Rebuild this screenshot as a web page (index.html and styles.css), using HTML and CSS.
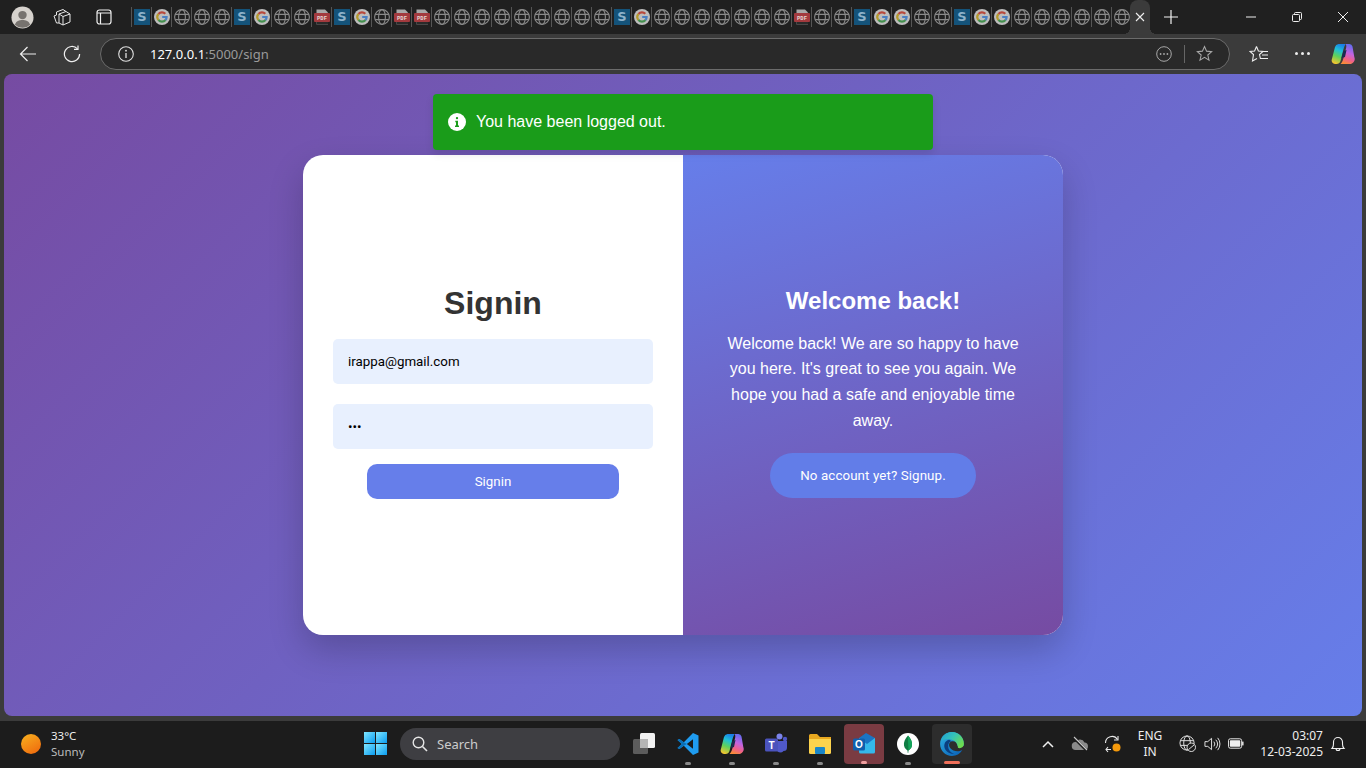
FILE: index.html
```html
<!DOCTYPE html>
<html>
<head>
    <title>Signin</title>
    <meta name="viewport" content="width=device-width, initial-scale=1.0">
    <link rel="stylesheet" href="styles.css">
</head>
<body>
    <svg class="defs" aria-hidden="true">
        <defs>
            <linearGradient id="copA" x1="0.6" y1="0" x2="0.3" y2="1"><stop offset="0" stop-color="#1a7fe8"/><stop offset="0.3" stop-color="#1fc0d8"/><stop offset="0.62" stop-color="#5fd25a"/><stop offset="1" stop-color="#f8c52e"/></linearGradient>
            <linearGradient id="copB" x1="0.7" y1="0" x2="0.4" y2="1"><stop offset="0" stop-color="#5a6cf0"/><stop offset="0.45" stop-color="#c264e0"/><stop offset="0.75" stop-color="#f0608a"/><stop offset="1" stop-color="#f88a3a"/></linearGradient>
            <linearGradient id="winG" x1="0" y1="0" x2="1" y2="1"><stop offset="0" stop-color="#7fe6ff"/><stop offset="1" stop-color="#0a9cf0"/></linearGradient>
            <linearGradient id="sunG" x1="0" y1="0" x2="0.6" y2="1"><stop offset="0" stop-color="#f7b21f"/><stop offset="1" stop-color="#f0700f"/></linearGradient>
            <linearGradient id="edgeA" x1="0" y1="0" x2="0.8" y2="1"><stop offset="0" stop-color="#2fb4e4"/><stop offset="1" stop-color="#0b62b8"/></linearGradient>
            <linearGradient id="edgeB" x1="0" y1="0" x2="1" y2="0.6"><stop offset="0" stop-color="#1f9fd8"/><stop offset="0.5" stop-color="#35c4b8"/><stop offset="1" stop-color="#6ddc50"/></linearGradient>
            <symbol id="fav-s" viewBox="0 0 16 16"><rect width="16" height="16" fill="#14537a"/><text x="8" y="12.400" text-anchor="middle" class="fav-s-text">S</text></symbol>
            <symbol id="fav-g" viewBox="0 0 16 16">
                <circle cx="8" cy="8" r="8" fill="#bdbdbd"/>
                <g fill="none" stroke-width="2.200">
                    <path d="M11.300 4.800A4.600 4.600 0 0 0 4.500 5" stroke="#b8483c"/>
                    <path d="M4.500 5A4.600 4.600 0 0 0 4.500 11" stroke="#b59a2c"/>
                    <path d="M4.500 11A4.600 4.600 0 0 0 11.500 11" stroke="#44904f"/>
                    <path d="M11.500 11A4.600 4.600 0 0 0 12.600 8H8.200" stroke="#4a7fc4"/>
                </g>
            </symbol>
            <symbol id="fav-w" viewBox="0 0 16 16">
                <g fill="none" stroke="#8a8a8a" stroke-width="1.100">
                    <circle cx="8" cy="8" r="7.400"/>
                    <ellipse cx="8" cy="8" rx="3.400" ry="7.400"/>
                    <path d="M1.200 5.400H14.800M1.200 10.600H14.800"/>
                </g>
            </symbol>
            <symbol id="fav-p" viewBox="0 0 16 16">
                <path d="M2.500 .5H11L14 3.500V15.500H2.500z" fill="#a9a9a9"/>
                <path d="M2.500 13H14V15.500H2.500z" fill="#2a2a2a"/>
                <rect y="4" width="16" height="9" rx="1" fill="#a33a3e"/>
                <text x="8" y="10.700" text-anchor="middle" class="fav-p-text">PDF</text>
            </symbol>
            <symbol id="copilot" viewBox="0 0 24 24">
                <path d="M7.500 2H14.500C12.500 6 12 9 11 13L9.500 19C9 21 7.500 22 5.500 22H4A3.500 3.500 0 0 1 .8 17.500L4 5A4 4 0 0 1 7.500 2z" fill="url(#copA)"/>
                <path d="M14.500 2H18.500A3.500 3.500 0 0 1 21.500 4.500L23.300 15A5 5 0 0 1 18.500 22H9.500C11.500 20 12 18 13 14L15 6.500C15.500 4.500 15.500 3 14.500 2z" fill="url(#copB)"/>
                <path d="M12.500 9L15.500 8 14 15 10.500 16z" fill="#1c2a50"/>
            </symbol>
        </defs>
    </svg>

    <div class="tabstrip">
        <div class="strip-left">
            <svg class="avatar" viewBox="0 0 24 24"><circle cx="12" cy="12" r="11.500" fill="#d6d2cd"/><circle cx="12" cy="9.500" r="4.400" fill="#77736f"/><path d="M4 19.500C5.500 15.500 8.500 14.600 12 14.600S18.500 15.500 20 19.500A11.500 11.500 0 0 1 4 19.500z" fill="#77736f"/></svg>
            <svg class="strip-icon workspaces" viewBox="0 0 18 18"><g fill="none" stroke="#e8e8e8" stroke-width="1"><path d="M6 6L13 3.500 17 6V14L10 17 6 15z"/><path d="M6 6L10 8.500 17 6M10 8.500V17"/><path d="M3.500 7L1 8 3.500 15 6 15M3.500 7L3.500 4 10 1.500 13 3.500"/></g></svg>
            <svg class="strip-icon vtabs" viewBox="0 0 16 16"><g fill="none" stroke="#f0f0f0" stroke-width="1.200"><rect x="1" y="1" width="14" height="14" rx="2.500"/><path d="M1 4H15M4.500 4V15"/></g></svg>
        </div>
        <div class="tabs">
            <div class="tab"><svg><use href="#fav-s"/></svg></div>
            <div class="tab"><svg><use href="#fav-g"/></svg></div>
            <div class="tab"><svg><use href="#fav-w"/></svg></div>
            <div class="tab"><svg><use href="#fav-w"/></svg></div>
            <div class="tab"><svg><use href="#fav-w"/></svg></div>
            <div class="tab"><svg><use href="#fav-s"/></svg></div>
            <div class="tab"><svg><use href="#fav-g"/></svg></div>
            <div class="tab"><svg><use href="#fav-w"/></svg></div>
            <div class="tab"><svg><use href="#fav-w"/></svg></div>
            <div class="tab"><svg><use href="#fav-p"/></svg></div>
            <div class="tab"><svg><use href="#fav-s"/></svg></div>
            <div class="tab"><svg><use href="#fav-g"/></svg></div>
            <div class="tab"><svg><use href="#fav-w"/></svg></div>
            <div class="tab"><svg><use href="#fav-p"/></svg></div>
            <div class="tab"><svg><use href="#fav-p"/></svg></div>
            <div class="tab"><svg><use href="#fav-w"/></svg></div>
            <div class="tab"><svg><use href="#fav-w"/></svg></div>
            <div class="tab"><svg><use href="#fav-w"/></svg></div>
            <div class="tab"><svg><use href="#fav-w"/></svg></div>
            <div class="tab"><svg><use href="#fav-w"/></svg></div>
            <div class="tab"><svg><use href="#fav-w"/></svg></div>
            <div class="tab"><svg><use href="#fav-w"/></svg></div>
            <div class="tab"><svg><use href="#fav-w"/></svg></div>
            <div class="tab"><svg><use href="#fav-w"/></svg></div>
            <div class="tab"><svg><use href="#fav-s"/></svg></div>
            <div class="tab"><svg><use href="#fav-g"/></svg></div>
            <div class="tab"><svg><use href="#fav-w"/></svg></div>
            <div class="tab"><svg><use href="#fav-w"/></svg></div>
            <div class="tab"><svg><use href="#fav-w"/></svg></div>
            <div class="tab"><svg><use href="#fav-w"/></svg></div>
            <div class="tab"><svg><use href="#fav-w"/></svg></div>
            <div class="tab"><svg><use href="#fav-w"/></svg></div>
            <div class="tab"><svg><use href="#fav-w"/></svg></div>
            <div class="tab"><svg><use href="#fav-p"/></svg></div>
            <div class="tab"><svg><use href="#fav-w"/></svg></div>
            <div class="tab"><svg><use href="#fav-w"/></svg></div>
            <div class="tab"><svg><use href="#fav-s"/></svg></div>
            <div class="tab"><svg><use href="#fav-g"/></svg></div>
            <div class="tab"><svg><use href="#fav-g"/></svg></div>
            <div class="tab"><svg><use href="#fav-w"/></svg></div>
            <div class="tab"><svg><use href="#fav-w"/></svg></div>
            <div class="tab"><svg><use href="#fav-s"/></svg></div>
            <div class="tab"><svg><use href="#fav-g"/></svg></div>
            <div class="tab"><svg><use href="#fav-g"/></svg></div>
            <div class="tab"><svg><use href="#fav-w"/></svg></div>
            <div class="tab"><svg><use href="#fav-w"/></svg></div>
            <div class="tab"><svg><use href="#fav-w"/></svg></div>
            <div class="tab"><svg><use href="#fav-w"/></svg></div>
            <div class="tab"><svg><use href="#fav-w"/></svg></div>
            <div class="tab"><svg><use href="#fav-w"/></svg></div>
        </div>
        <div class="tab-active">
            <svg viewBox="0 0 10 10"><path d="M1 1L9 9M9 1L1 9" stroke="#f0f0f0" stroke-width="1.100"/></svg>
        </div>
        <svg class="new-tab" viewBox="0 0 14 14"><path d="M7 0V14M0 7H14" stroke="#f4f4f4" stroke-width="1.200"/></svg>
        <div class="win-controls">
            <svg viewBox="0 0 10 10"><path d="M0 5H10" stroke="#eee" stroke-width="1"/></svg>
            <svg viewBox="0 0 10 10"><g fill="none" stroke="#eee" stroke-width="1"><rect x="0.5" y="2.500" width="7" height="7" rx="1"/><path d="M2.500 2.500V1.500A1 1 0 0 1 3.500 .5H8.500A1 1 0 0 1 9.500 1.500V6.500A1 1 0 0 1 8.500 7.500H7.500"/></g></svg>
            <svg viewBox="0 0 10 10"><path d="M0 0L10 10M10 0L0 10" stroke="#eee" stroke-width="1"/></svg>
        </div>
    </div>

    <div class="toolbar">
        <svg class="tool back" viewBox="0 0 18 18"><path d="M17 9H1.500M8.500 2L1.500 9L8.500 16" fill="none" stroke="#eee" stroke-width="1.200"/></svg>
        <svg class="tool reload" viewBox="0 0 18 18"><path d="M14.500 3.800A7.600 7.600 0 1 0 16.600 9" fill="none" stroke="#eee" stroke-width="1.200"/><path d="M15 .5V4.300H11" fill="none" stroke="#eee" stroke-width="1.200"/></svg>
        <div class="address">
            <svg class="addr-info" viewBox="0 0 16 16"><circle cx="8" cy="8" r="7.300" fill="none" stroke="#e0e0e0" stroke-width="1.100"/><path d="M8 7V12" stroke="#e0e0e0" stroke-width="1.300"/><circle cx="8" cy="4.700" r=".9" fill="#e0e0e0"/></svg>
            <span class="url"><span class="url-host">127.0.0.1</span>:5000/sign</span>
            <svg class="addr-more" viewBox="0 0 16 16"><circle cx="8" cy="8" r="7.300" fill="none" stroke="#a8a8a8" stroke-width="1"/><circle cx="4.600" cy="8" r=".9" fill="#a8a8a8"/><circle cx="8" cy="8" r=".9" fill="#a8a8a8"/><circle cx="11.400" cy="8" r=".9" fill="#a8a8a8"/></svg>
            <span class="addr-sep"></span>
            <svg class="addr-star" viewBox="0 0 18 18"><path d="M9 1.500L11.200 6.500 16.600 7 12.500 10.600 13.800 16 9 13.100 4.200 16 5.500 10.600 1.400 7 6.800 6.500z" fill="none" stroke="#a8a8a8" stroke-width="1.100"/></svg>
        </div>
        <svg class="tool fav" viewBox="0 0 20 18"><path d="M7.500 1.500L9.400 6 14 6.400 10.500 9.500 11.500 14M7.500 1.500L5.600 6 1 6.400 4.500 9.500 3.500 16 8 13.500" fill="none" stroke="#eee" stroke-width="1.100"/><path d="M13 6.500H19M13 10H19M11 13.500H19" stroke="#eee" stroke-width="1.100"/></svg>
        <div class="tool-dots"><i></i><i></i><i></i></div>
        <svg class="tool copilot"><use href="#copilot"/></svg>
    </div>

    <main class="page">
        <div class="alert">
            <svg viewBox="0 0 18 18"><circle cx="9" cy="9" r="9" fill="#fff"/><rect x="7.900" y="4" width="2.200" height="2.200" rx="1" fill="#1a9c1a"/><path d="M7.300 7.700H10V12.500H11V14H7V12.500H8V9.200H7.300z" fill="#1a9c1a"/></svg>
            <span>You have been logged out.</span>
        </div>
        <div class="card">
            <form class="signin-panel">
                <h1>Signin</h1>
                <input type="email" value="irappa@gmail.com">
                <input type="password" value="123">
                <button type="button" class="signin-btn">Signin</button>
            </form>
            <div class="welcome-panel">
                <h2>Welcome back!</h2>
                <p>Welcome back! We are so happy to have you here. It's great to see you again. We hope you had a safe and enjoyable time away.</p>
                <button type="button" class="signup-btn">No account yet? Signup.</button>
            </div>
        </div>
    </main>

    <footer class="taskbar">
        <div class="weather">
            <svg viewBox="0 0 20 20"><circle cx="10" cy="10" r="10" fill="url(#sunG)"/></svg>
            <div class="weather-text"><span>33°C</span><span class="weather-sub">Sunny</span></div>
        </div>
        <div class="task-center">
            <div class="task-btn"><svg class="win-logo" viewBox="0 0 23 23"><rect width="11" height="11" fill="url(#winG)"/><rect x="12" width="11" height="11" fill="url(#winG)"/><rect y="12" width="11" height="11" fill="url(#winG)"/><rect x="12" y="12" width="11" height="11" fill="url(#winG)"/></svg></div>
            <div class="search">
                <svg viewBox="0 0 16 16"><circle cx="6.500" cy="6.500" r="5.300" fill="none" stroke="#e6e6e6" stroke-width="1.400"/><path d="M10.500 10.500L15 15" stroke="#e6e6e6" stroke-width="1.600"/></svg>
                <span>Search</span>
            </div>
            <div class="task-btn"><svg viewBox="0 0 24 24"><rect x="1" y="7" width="15" height="15" rx="1.500" fill="#5c5c5c"/><rect x="8" y="1" width="15" height="15" rx="1.500" fill="#f2f2f2"/><rect x="8" y="7" width="8" height="9" fill="#b5b5b5"/></svg></div>
            <div class="task-btn on"><svg viewBox="0 0 24 24"><path d="M17 1L7.800 10.300 3.400 7 1.500 8 5.800 12 1.500 16 3.400 17 7.800 13.700 17 23 22.500 20.500V3.500zM17 7.300V16.700L10.800 12z" fill="#1f9cf0" fill-rule="evenodd"/><path d="M3.400 7L1.500 8 5.800 12 1.500 16 3.400 17 7.800 13.700 10.800 12 7.800 10.300z" fill="#0a6fb5"/></svg></div>
            <div class="task-btn on"><svg><use href="#copilot"/></svg></div>
            <div class="task-btn on"><svg viewBox="0 0 24 24"><circle cx="15.500" cy="4.500" r="3" fill="#7b83eb"/><circle cx="21" cy="7" r="2.200" fill="#5059c9"/><path d="M12 9H23V15.500A3.500 3.500 0 0 1 19.500 19 3 3 0 0 1 17 20.500 5 5 0 0 1 12 16z" fill="#5059c9"/><rect x="1" y="6.500" width="13" height="13" rx="1.500" fill="#4b53bc"/><text x="7.500" y="16.600" text-anchor="middle" class="teams-t">T</text></svg></div>
            <div class="task-btn on"><svg viewBox="0 0 24 24"><path d="M1 3.500A1.500 1.500 0 0 1 2.500 2H9L12 5H23V8H1z" fill="#e8a820"/><path d="M1 7H23V20.500A1.500 1.500 0 0 1 21.500 22H2.500A1.500 1.500 0 0 1 1 20.500z" fill="#fcd34d"/><rect x="7" y="15" width="10" height="7" rx="1" fill="#1a86c8"/></svg></div>
            <div class="task-btn on outlook"><svg viewBox="0 0 24 24"><path d="M14 1L23 6V19H7V6z" fill="#1a74c4"/><path d="M7 6L15 12 23 6V20A1.500 1.500 0 0 1 21.500 21.500H8.500A1.500 1.500 0 0 1 7 20z" fill="#35b8ea"/><rect x="1" y="6.500" width="12" height="12" rx="1.500" fill="#0f5fae"/><text x="7" y="16.200" text-anchor="middle" class="outlook-o">O</text></svg></div>
            <div class="task-btn on"><svg viewBox="0 0 24 24"><circle cx="12" cy="12" r="11" fill="#fff"/><path d="M12 3.500C15 7 16.500 10 16 13.500 15.500 16.500 13.500 17.500 12.500 18.500L12.200 21H11.800L11.500 18.500C10.500 17.500 8.500 16.500 8 13.500 7.500 10 9 7 12 3.500z" fill="#0f7d44"/><path d="M12 3.500C15 7 16.500 10 16 13.500 15.500 16.500 13.500 17.500 12.500 18.500L12 8z" fill="#14a35a"/></svg></div>
            <div class="task-btn on edge"><svg viewBox="0 0 24 24"><path d="M12 1C5.900 1 1 5.900 1 12S5.900 23 12 23C16 23 19.500 21 21.500 17.500 18 19.500 13 19 10.500 16 8.500 13.500 9 10 12 9.500 15 9 17 11 17 13.500H23V12C23 5.900 18.100 1 12 1z" fill="url(#edgeA)"/><path d="M2.500 6.500C4.500 3 8 1 12 1 18.100 1 23 5.900 23 12 23 15 20 16.500 17.500 15.500 17.500 11 14 7.500 9.500 7.500 6.500 7.500 4 7.500 2.500 9z" fill="url(#edgeB)"/><path d="M9.500 8C6 8.500 4.500 11.500 5 15 6 19 10 21.500 14 21 11 20 8.500 17.500 8.500 14 8.500 11.500 9.500 10 11.500 9.500z" fill="#0b3f80"/></svg></div>
        </div>
        <div class="tray">
            <svg class="tray-chev" viewBox="0 0 12 8"><path d="M1 7L6 2 11 7" fill="none" stroke="#f0f0f0" stroke-width="1.500"/></svg>
            <svg class="tray-cloud" viewBox="0 0 18 16"><path d="M5 14A4 4 0 0 1 4.500 6 5 5 0 0 1 13.500 6.500 3.800 3.800 0 0 1 14 14z" fill="#8a8a8a"/><path d="M2 1L16 15" stroke="#1c1c1c" stroke-width="2.500"/><path d="M3 1L16 14" stroke="#c8c8c8" stroke-width="1.100"/></svg>
            <svg class="tray-sync" viewBox="0 0 18 18"><path d="M1.500 8A6.500 6.500 0 0 1 13.500 4.500M2 14.500H7" fill="none" stroke="#e8e8e8" stroke-width="1.100"/><path d="M14 1V5H10M4 12L2 14.500 4 17" fill="none" stroke="#e8e8e8" stroke-width="1.100"/><circle cx="12.500" cy="12.500" r="4" fill="#f59a0c"/></svg>
            <div class="tray-lang"><span>ENG</span><span>IN</span></div>
            <svg class="tray-globe" viewBox="0 0 18 18"><g fill="none" stroke="#e8e8e8" stroke-width="1"><circle cx="8.500" cy="8.500" r="7.500"/><ellipse cx="8.500" cy="8.500" rx="3.500" ry="7.500"/><path d="M1.500 6H15.500M1.500 11H15.500"/></g><circle cx="13" cy="13" r="4.500" fill="#1c1c1c" stroke="#e8e8e8"/><path d="M10 15.500L16 10.500" stroke="#e8e8e8"/></svg>
            <svg class="tray-speaker" viewBox="0 0 18 16"><g fill="none" stroke="#e8e8e8" stroke-width="1"><path d="M1 5.500H4L8 2V14L4 10.500H1z"/><path d="M10.500 5.500A4 4 0 0 1 10.500 10.500M12.500 3.500A7 7 0 0 1 12.500 12.500M14.500 1.500A10 10 0 0 1 14.500 14.500"/></g></svg>
            <svg class="tray-battery" viewBox="0 0 17 11"><rect x=".5" y=".5" width="14" height="10" rx="2" fill="none" stroke="#f0f0f0"/><rect x="2" y="2" width="11" height="7" rx=".8" fill="#f0f0f0"/><rect x="15" y="3.500" width="1.500" height="4" fill="#f0f0f0"/></svg>
            <div class="tray-clock"><span>03:07</span><span>12-03-2025</span></div>
            <svg class="tray-bell" viewBox="0 0 16 16"><path d="M2 12.500C3 11.500 3.500 10.500 3.500 8V6A4.500 4.500 0 0 1 12.500 6V8C12.500 10.500 13 11.500 14 12.500zM6 12.500A2 2 0 0 0 10 12.500" fill="none" stroke="#f0f0f0" stroke-width="1.100"/></svg>
        </div>
    </footer>
</body>
</html>
```

FILE: styles.css
```css
* {
    box-sizing: border-box;
}

html,
body {
    margin: 0;
    height: 768px;
    overflow: hidden;
}

body {
    display: flex;
    flex-direction: column;
    background-color: #3b3b3b;
    font-family: "Liberation Sans", Arial, sans-serif;
}

.defs {
    display: block;
    width: 0;
    height: 0;
}

.fav-s-text {
    font: bold 13px "DejaVu Sans", sans-serif;
    fill: #8fb2ca;
}

.fav-p-text {
    font: bold 5.500px "Liberation Mono", monospace;
    fill: #e6d8d8;
}

.teams-t,
.outlook-o {
    font: bold 10px "Liberation Sans", sans-serif;
    fill: #fff;
}

/* Tab strip */
.tabstrip {
    display: flex;
    align-items: center;
    height: 34px;
    background-color: #202020;
}

.strip-left {
    display: flex;
    align-items: center;
    flex: 0 0 131px;
    padding-left: 11px;
}

.avatar {
    width: 23px;
    height: 23px;
    margin-right: 19px;
}

.strip-icon {
    width: 16px;
    height: 16px;
}

.workspaces {
    width: 18px;
    height: 18px;
    margin-right: 25px;
}

.tabs {
    display: flex;
    flex: 0 0 999px;
    overflow: hidden;
}

.tab {
    display: flex;
    flex: none;
    align-items: center;
    justify-content: center;
    width: 20px;
    height: 20px;
    border-left: 1px solid #555;
}

.tab svg {
    width: 16px;
    height: 16px;
}

.tab-active {
    position: relative;
    display: flex;
    align-items: center;
    justify-content: center;
    align-self: flex-end;
    width: 20px;
    height: 34px;
    background-color: #3b3b3b;
    border-radius: 8px 8px 0 0;
}

.tab-active::before,
.tab-active::after {
    content: "";
    position: absolute;
    bottom: 0;
    width: 6px;
    height: 6px;
}

.tab-active::before {
    left: -6px;
    background: radial-gradient(circle at 0 0, transparent 6px, #3b3b3b 6px);
}

.tab-active::after {
    right: -6px;
    background: radial-gradient(circle at 100% 0, transparent 6px, #3b3b3b 6px);
}

.tab-active svg {
    width: 10px;
    height: 10px;
}

.new-tab {
    width: 14px;
    height: 14px;
    margin-left: 14px;
}

.win-controls {
    display: flex;
    justify-content: space-between;
    align-items: center;
    margin-left: auto;
    width: 102px;
    margin-right: 18px;
}

.win-controls svg {
    width: 10px;
    height: 10px;
}

/* Toolbar */
.toolbar {
    display: flex;
    align-items: center;
    height: 40px;
    padding-bottom: 1px;
}

.tool {
    width: 18px;
    height: 18px;
}

.back {
    margin-left: 19px;
    margin-right: 26px;
}

.reload {
    margin-right: 19px;
}

.address {
    display: flex;
    align-items: center;
    width: 1130px;
    height: 32px;
    padding: 0 16px 0 17px;
    background-color: #292929;
    border: 1px solid #6b6b6b;
    border-radius: 16px;
}

.addr-info {
    width: 16px;
    height: 16px;
    margin-right: 16px;
}

.url {
    font-family: "Noto Sans", sans-serif;
    font-size: 13px;
    color: #9a9a9a;
}

.url-host {
    color: #fff;
}

.addr-more {
    width: 16px;
    height: 16px;
    margin-left: auto;
}

.addr-sep {
    width: 1px;
    height: 18px;
    margin: 0 11px 0 12px;
    background-color: #666;
}

.addr-star {
    width: 17px;
    height: 17px;
}

.fav {
    width: 20px;
    margin-left: 19px;
}

.tool-dots {
    display: flex;
    gap: 3px;
    margin-left: 26px;
}

.tool-dots i {
    width: 3px;
    height: 3px;
    background-color: #eee;
    border-radius: 50%;
}

.copilot {
    width: 24px;
    height: 24px;
    margin-left: 21px;
}

/* Page */
.page {
    position: relative;
    display: flex;
    align-items: center;
    justify-content: center;
    flex: 0 0 642px;
    margin: 0 4px;
    background: linear-gradient(135deg, #764ba2 0%, #667eea 100%);
    border-radius: 8px;
}

.alert {
    position: absolute;
    top: 20px;
    left: 429px;
    display: flex;
    align-items: center;
    gap: 10px;
    width: 500px;
    height: 56px;
    padding-left: 15px;
    background-color: #1a9c1a;
    border-radius: 4px;
    box-shadow: 0 4px 8px rgba(0, 0, 0, 0.1);
    font-size: 16px;
    color: #fff;
}

.alert svg {
    width: 18px;
    height: 18px;
}

.card {
    display: flex;
    width: 760px;
    height: 480px;
    background-color: #fff;
    border-radius: 20px;
    box-shadow: 0 15px 35px rgba(0, 0, 0, 0.2);
    overflow: hidden;
}

.signin-panel {
    display: flex;
    flex-direction: column;
    align-items: center;
    justify-content: center;
    width: 380px;
    padding: 0 30px 6px;
}

h1 {
    margin: 0 0 17px;
    font-size: 32px;
    color: #333;
}

input {
    width: 320px;
    height: 45px;
    margin-bottom: 20px;
    padding: 0 15px;
    background-color: #e8f0fe;
    border: none;
    border-radius: 5px;
    font-family: Roboto, sans-serif;
    font-size: 13.330px;
    color: #000;
}

input[type="password"] {
    margin-bottom: 15px;
}

.signin-btn {
    width: 252px;
    height: 35px;
    background-color: #667eea;
    border: none;
    border-radius: 10px;
    font-family: Roboto, sans-serif;
    font-size: 13.330px;
    color: #fff;
}

.welcome-panel {
    display: flex;
    flex-direction: column;
    align-items: center;
    justify-content: center;
    width: 380px;
    padding: 0 40px 5px;
    background: linear-gradient(165deg, #667eea 0%, #764ba2 100%);
    text-align: center;
    color: #fff;
}

h2 {
    margin: 0 0 15.500px;
    font-size: 24px;
}

.welcome-panel p {
    margin: 0 0 19.500px;
    font-size: 16px;
    line-height: 25.600px;
}

.signup-btn {
    width: 206px;
    height: 45px;
    background-color: #627de8;
    border: none;
    border-radius: 25px;
    font-family: Roboto, sans-serif;
    font-size: 13.330px;
    letter-spacing: 0.1px;
    color: #fff;
}

/* Taskbar */
.taskbar {
    display: flex;
    align-items: center;
    height: 47px;
    margin-top: 5px;
    padding-bottom: 2px;
    background-color: #1c1c1c;
    font-family: "Noto Sans", sans-serif;
    color: #eee;
}

.weather {
    display: flex;
    align-items: center;
    flex: 0 0 353px;
    padding-left: 21px;
}

.weather svg {
    width: 20px;
    height: 20px;
    margin-right: 10px;
}

.weather-text {
    display: flex;
    flex-direction: column;
    font-size: 11.500px;
    line-height: 16px;
}

.weather-sub {
    color: #bbb;
}

.task-center {
    display: flex;
    align-items: center;
}

.task-btn {
    position: relative;
    display: flex;
    align-items: center;
    justify-content: center;
    width: 44px;
    height: 40px;
}

.task-btn svg {
    width: 24px;
    height: 24px;
}

.task-btn .win-logo {
    width: 23px;
    height: 23px;
}

.task-btn.on::after {
    content: "";
    position: absolute;
    bottom: -1px;
    left: 19px;
    width: 6px;
    height: 3px;
    background-color: #8a8a8a;
    border-radius: 2px;
}

.outlook {
    width: 40px;
    margin: 0 2px;
    background-color: #7a3b42;
    border-radius: 4px;
}

.task-btn.outlook::after {
    left: 17px;
    bottom: 0;
    background-color: #f0a0a0;
}

.edge {
    width: 40px;
    margin: 0 2px;
    background-color: #2d2d2d;
    border-radius: 4px;
}

.task-btn.edge svg {
    width: 26px;
    height: 26px;
}

.task-btn.edge::after {
    left: 12px;
    bottom: 0;
    width: 16px;
    background-color: #f0705a;
}

.search {
    display: flex;
    align-items: center;
    gap: 9px;
    width: 220px;
    height: 32px;
    margin: 0 2px 0 3px;
    padding-left: 12px;
    background-color: #3e3e42;
    border-radius: 16px;
    font-size: 13px;
    color: #ccc;
}

.search svg {
    width: 16px;
    height: 16px;
}

.tray {
    display: flex;
    align-items: center;
    margin-left: auto;
    padding-right: 20px;
    font-size: 12px;
}

.tray-chev {
    width: 12px;
    height: 8px;
    margin-right: 17px;
}

.tray-cloud {
    width: 18px;
    height: 16px;
    margin-right: 15px;
}

.tray-sync {
    width: 18px;
    height: 18px;
    margin-right: 15px;
}

.tray-lang {
    display: flex;
    flex-direction: column;
    align-items: center;
    width: 26px;
    margin-right: 16px;
    line-height: 16px;
}

.tray-globe {
    width: 17px;
    height: 17px;
    margin-right: 8px;
}

.tray-speaker {
    width: 17px;
    height: 16px;
    margin-right: 7px;
}

.tray-battery {
    width: 16px;
    height: 11px;
    margin-right: 16px;
}

.tray-clock {
    display: flex;
    flex-direction: column;
    align-items: flex-end;
    width: 63px;
    margin-right: 7px;
    line-height: 16px;
}

.tray-bell {
    width: 16px;
    height: 16px;
}
```
